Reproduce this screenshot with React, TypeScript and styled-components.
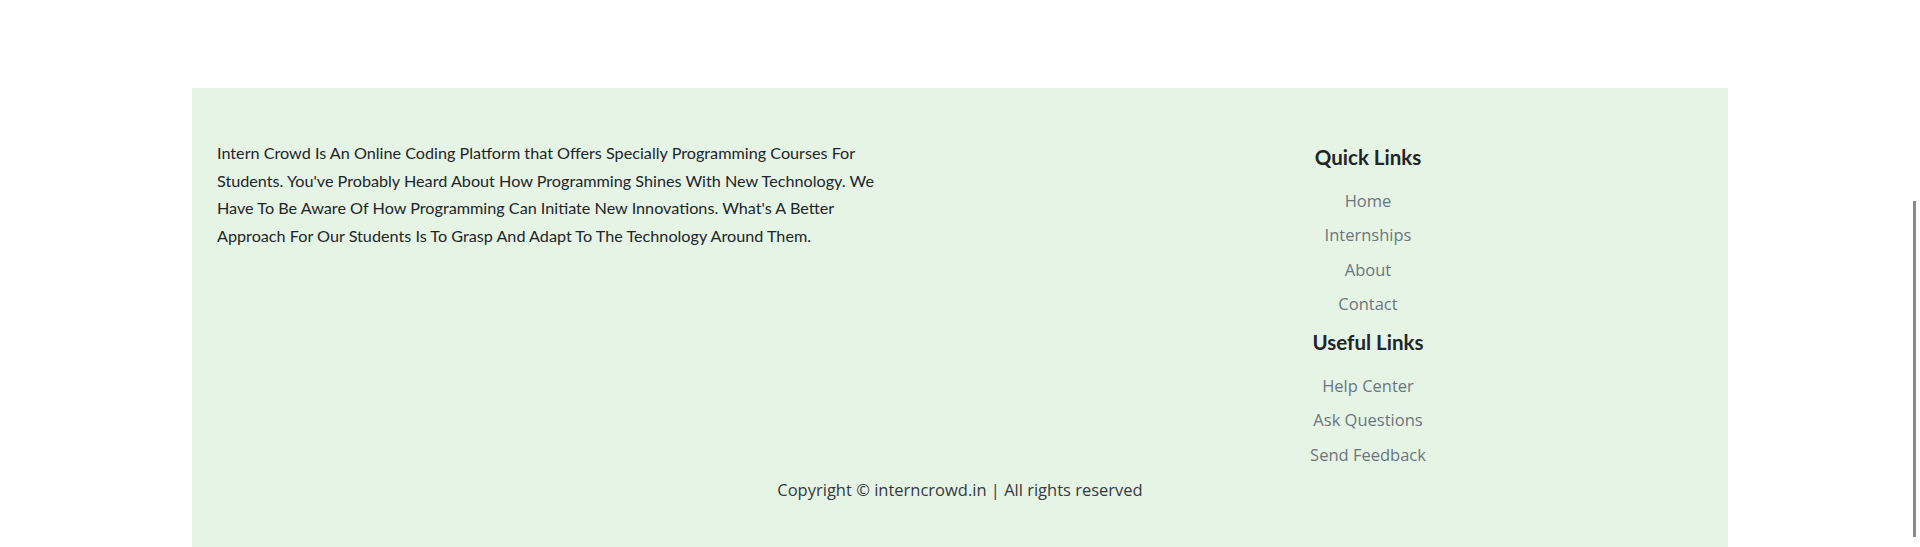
import styled, { createGlobalStyle } from "styled-components";

const GlobalStyle = createGlobalStyle`
  html, body {
    margin: 0;
    padding: 0;
    background: #ffffff;
    overflow: hidden;
  }
  * {
    box-sizing: border-box;
  }
`;

const Page = styled.div`
  padding-top: 88px;
`;

const Footer = styled.footer`
  width: 80%;
  margin: 0 auto;
  background-color: #e6f4e6;
  padding: 52px 0 50px;
`;

const TopRow = styled.div`
  display: flex;
  align-items: flex-start;
  padding-left: 25px;
  padding-right: 240px;
`;

const About = styled.p`
  margin: -1px 0 0;
  width: 676px;
  font-family: Lato, "Liberation Sans", sans-serif;
  font-size: 16.2px;
  line-height: 27.7px;
  color: #212529;
`;

const LinksColumn = styled.div`
  margin-left: auto;
  width: 240px;
  display: flex;
  flex-direction: column;
  align-items: center;
`;

const Heading = styled.h4<{ $first?: boolean }>`
  margin: ${(p) => (p.$first ? "0" : "4px")} 0 10px;
  font-family: Lato, "Liberation Sans", sans-serif;
  font-weight: 700;
  font-size: 20.5px;
  line-height: 34px;
  color: #212529;
`;

const LinkList = styled.ul`
  list-style: none;
  margin: 0;
  padding: 0;
  display: flex;
  flex-direction: column;
  align-items: center;
`;

const LinkItem = styled.li`
  a {
    display: block;
    font-family: "Open Sans", "Noto Sans", sans-serif;
    font-size: 16.5px;
    line-height: 34.3px;
    color: #6c757d;
    text-decoration: none;
  }
`;

const Copyright = styled.div`
  margin-top: 6px;
  text-align: center;
  font-family: "Open Sans", "Noto Sans", sans-serif;
  font-size: 16.5px;
  line-height: 24px;
  color: #343a40;
`;

const ScrollThumb = styled.div`
  position: fixed;
  right: 4px;
  top: 201px;
  width: 3px;
  height: 336px;
  background: #8a8a8a;
`;

const quickLinks = ["Home", "Internships", "About", "Contact"];
const usefulLinks = ["Help Center", "Ask Questions", "Send Feedback"];

function App() {
  return (
    <>
      <GlobalStyle />
      <Page>
        <Footer>
          <TopRow>
            <About>
              Intern Crowd Is An Online Coding Platform that Offers Specially
              Programming Courses For Students. You've Probably Heard About How
              Programming Shines With New Technology. We Have To Be Aware Of How
              Programming Can Initiate New Innovations. What's A Better Approach
              For Our Students Is To Grasp And Adapt To The Technology Around
              Them.
            </About>
            <LinksColumn>
              <Heading $first>Quick Links</Heading>
              <LinkList>
                {quickLinks.map((l) => (
                  <LinkItem key={l}>
                    <a href="#">{l}</a>
                  </LinkItem>
                ))}
              </LinkList>
              <Heading>Useful Links</Heading>
              <LinkList>
                {usefulLinks.map((l) => (
                  <LinkItem key={l}>
                    <a href="#">{l}</a>
                  </LinkItem>
                ))}
              </LinkList>
            </LinksColumn>
          </TopRow>
          <Copyright>Copyright © interncrowd.in | All rights reserved</Copyright>
        </Footer>
      </Page>
      <ScrollThumb />
    </>
  );
}

export default App;
